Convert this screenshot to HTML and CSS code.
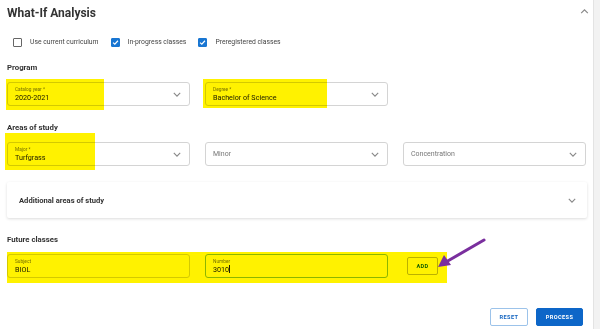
FILE: index.html
```html
<!DOCTYPE html>
<html lang="en">
<head>
  <meta charset="UTF-8">
  <title>What-If Analysis</title>
  <link rel="stylesheet" href="styles.css">
</head>
<body>

  <div class="tarjeta">
    <div class="cabecera">
      <h1>What-If Analysis</h1>
      <svg class="chevron-arriba" width="9" height="5" viewBox="0 0 10 6"><path d="M1 5 L5 1 L9 5" fill="none" stroke="#888" stroke-width="1.4"/></svg>
    </div>

    <div class="opciones">
      <label class="opcion"><span class="caja"></span>Use current curriculum</label>
      <label class="opcion"><span class="caja marcada"><svg width="7" height="7" viewBox="0 0 8 8"><path d="M1.2 4.2 L3.2 6 L6.8 2" fill="none" stroke="#fff" stroke-width="1.3"/></svg></span>In-progress classes</label>
      <label class="opcion"><span class="caja marcada"><svg width="7" height="7" viewBox="0 0 8 8"><path d="M1.2 4.2 L3.2 6 L6.8 2" fill="none" stroke="#fff" stroke-width="1.3"/></svg></span>Preregistered classes</label>
    </div>

    <h2>Program</h2>
    <div class="fila">
      <div class="campo">
        <div class="texto"><span class="etiqueta">Catalog year *</span><span class="valor">2020-2021</span></div>
        <svg class="chevron" width="8" height="5" viewBox="0 0 10 6"><path d="M1 1 L5 5 L9 1" fill="none" stroke="#888" stroke-width="1.4"/></svg>
      </div>
      <div class="campo">
        <div class="texto"><span class="etiqueta">Degree *</span><span class="valor">Bachelor of Science</span></div>
        <svg class="chevron" width="8" height="5" viewBox="0 0 10 6"><path d="M1 1 L5 5 L9 1" fill="none" stroke="#888" stroke-width="1.4"/></svg>
      </div>
    </div>

    <h2 class="areas">Areas of study</h2>
    <div class="fila">
      <div class="campo">
        <div class="texto"><span class="etiqueta">Major *</span><span class="valor">Turfgrass</span></div>
        <svg class="chevron" width="8" height="5" viewBox="0 0 10 6"><path d="M1 1 L5 5 L9 1" fill="none" stroke="#888" stroke-width="1.4"/></svg>
      </div>
      <div class="campo">
        <div class="texto"><span class="vacio">Minor</span></div>
        <svg class="chevron" width="8" height="5" viewBox="0 0 10 6"><path d="M1 1 L5 5 L9 1" fill="none" stroke="#888" stroke-width="1.4"/></svg>
      </div>
      <div class="campo">
        <div class="texto"><span class="vacio">Concentration</span></div>
        <svg class="chevron" width="8" height="5" viewBox="0 0 10 6"><path d="M1 1 L5 5 L9 1" fill="none" stroke="#888" stroke-width="1.4"/></svg>
      </div>
    </div>

    <div class="panel">
      <span>Additional areas of study</span>
      <svg class="chevron" width="8" height="5" viewBox="0 0 10 6"><path d="M1 1 L5 5 L9 1" fill="none" stroke="#888" stroke-width="1.4"/></svg>
    </div>

    <h2 class="futuras">Future classes</h2>
    <div class="fila">
      <div class="campo">
        <div class="texto"><span class="etiqueta">Subject</span><span class="valor">BIOL</span></div>
      </div>
      <div class="campo activo">
        <div class="texto"><span class="etiqueta">Number</span><span class="valor">3010<i class="cursor"></i></span></div>
      </div>
      <div class="hueco"><button class="boton-add">ADD</button></div>
    </div>

    <div class="acciones">
      <button class="boton-reset">RESET</button>
      <button class="boton-process">PROCESS</button>
    </div>

    <!-- marcas de resaltador encima del formulario -->
    <div class="resaltado r1"></div>
    <div class="resaltado r2"></div>
    <div class="resaltado r3"></div>
    <div class="resaltado r4"></div>
    <svg class="flecha" width="60" height="40" viewBox="0 0 60 40">
      <path d="M50 4 L12 26" stroke="#7a2f9e" stroke-width="3" stroke-linecap="round"/>
      <path d="M4 31 L10 19 L17 29 Z" fill="#7a2f9e"/>
    </svg>
  </div>

</body>
</html>
```

FILE: styles.css
```css
body {
  margin: 0;
  background-color: #f2f2f2;
  font-family: Roboto, "Liberation Sans", sans-serif;
  color: #333;
}
.tarjeta {
  position: relative;
  width: 586px;
  height: 340px;
  padding: 0 0 0 7px;
  margin-right: 4px;
  background-color: #fff;
  border-right: 1px solid #e3e3e3;
}
.cabecera {
  display: flex;
  justify-content: space-between;
  align-items: center;
  height: 26px;
}
.cabecera svg {
  margin-right: 4px;
  margin-top: -3px;
}
h1 {
  margin: 0;
  font-size: 12px;
  font-weight: 700;
  color: #333;
}
.opciones {
  display: flex;
  align-items: center;
  height: 32px;
  padding-left: 6px;
  font-size: 6.8px;
  color: #444;
}
.opcion {
  display: flex;
  align-items: center;
  margin-right: 12px;
}
.caja {
  width: 7px;
  height: 7px;
  border: 1px solid #666;
  border-radius: 1px;
  margin-right: 8px;
  display: flex;
  align-items: center;
  justify-content: center;
}
.caja.marcada {
  background-color: #1976d2;
  border-color: #1976d2;
}
h2 {
  margin: 0;
  height: 16px;
  line-height: 19px;
  font-size: 7.8px;
  font-weight: 700;
  color: #333;
}
.fila {
  display: flex;
  gap: 15px;
  margin-top: 8px;
}
.campo {
  box-sizing: border-box;
  width: 183px;
  height: 24px;
  border: 1px solid #d4d4d4;
  border-radius: 3px;
  display: flex;
  align-items: center;
  justify-content: space-between;
  padding: 0 8px 0 7px;
}
.campo.activo {
  border: 1.5px solid #8cc0f0;
}
.texto {
  display: flex;
  flex-direction: column;
}
.etiqueta {
  font-size: 4.8px;
  color: #777;
  line-height: 7px;
}
.valor {
  font-size: 7.2px;
  color: #222;
  line-height: 9px;
}
.vacio {
  font-size: 7px;
  color: #777;
}
.cursor {
  display: inline-block;
  width: 1px;
  height: 8px;
  background-color: #222;
  vertical-align: -1px;
}
.areas {
  margin-top: 12px;
}
.panel {
  box-sizing: border-box;
  width: 580px;
  height: 36px;
  margin-top: 16px;
  padding: 0 11px 0 12px;
  display: flex;
  align-items: center;
  justify-content: space-between;
  font-size: 7.6px;
  font-weight: 700;
  color: #333;
  box-shadow: 0 1px 3px rgba(0,0,0,0.14);
  border-radius: 2px;
}
.futuras {
  margin-top: 12px;
}
.hueco {
  display: flex;
  align-items: center;
  padding-left: 4px;
}
button {
  font-family: Roboto, "Liberation Sans", sans-serif;
  font-weight: 700;
  font-size: 5.6px;
  letter-spacing: 0.4px;
  cursor: pointer;
  border-radius: 2px;
  padding: 0;
}
.boton-add {
  width: 31px;
  height: 18px;
  background-color: #fff;
  border: 1px solid #bbb;
  color: #1565c0;
}
.acciones {
  display: flex;
  justify-content: flex-end;
  gap: 8px;
  margin-top: 30px;
  margin-right: 10px;
}
.boton-reset {
  width: 38px;
  height: 18px;
  background-color: #fff;
  border: 1px solid #9cc3ea;
  color: #1565c0;
}
.boton-process {
  width: 47px;
  height: 18px;
  background-color: #0d66c8;
  border: 1px solid #0d66c8;
  color: #fff;
}
.resaltado {
  position: absolute;
  background-color: #fff200;
  mix-blend-mode: multiply;
}
.r1 { left: 6px; top: 79px; width: 98px; height: 31px; }
.r2 { left: 203px; top: 79px; width: 124px; height: 29px; }
.r3 { left: 5px; top: 133px; width: 90px; height: 37px; }
.r4 { left: 7px; top: 252px; width: 440px; height: 31px; }
.flecha {
  position: absolute;
  left: 434px;
  top: 236px;
}
```
